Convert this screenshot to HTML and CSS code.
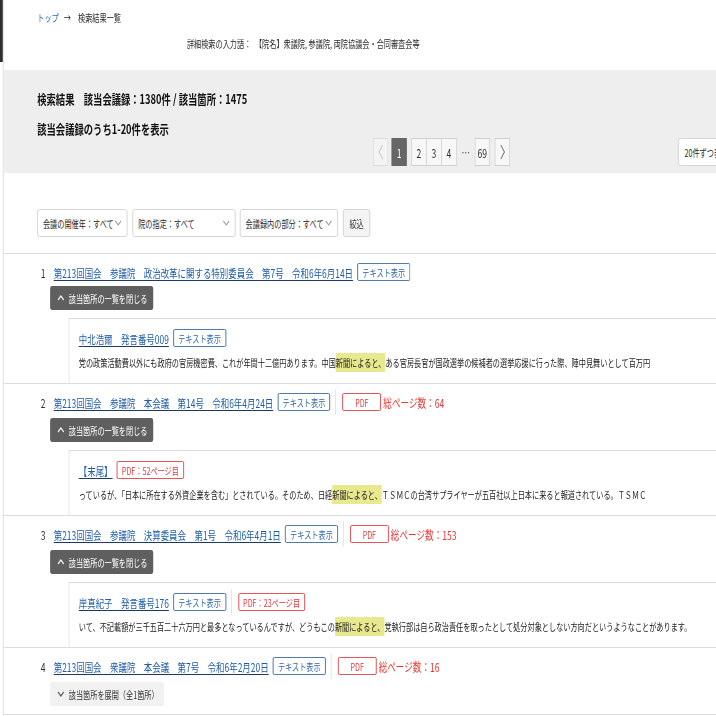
FILE: index.html
```html
<!DOCTYPE html>
<html lang="ja">
<head>
<meta charset="utf-8">
<title>検索結果一覧</title>
<link rel="stylesheet" href="styles.css">
</head>
<body>
<div class="screen">
  <div class="edge"><div class="edge-dark"></div></div>
  <main class="page">
    <nav class="crumbs"><a href="#">トップ</a><span class="arrow">→</span><span>検索結果一覧</span></nav>
    <p class="terms">詳細検索の入力語：　【院名】衆議院, 参議院, 両院協議会・合同審査会等</p>

    <section class="summary">
      <h1>検索結果　該当会議録：1380件 / 該当箇所：1475</h1>
      <h2>該当会議録のうち1-20件を表示</h2>
      <div class="pager-row">
        <ul class="pager">
          <li class="pg prev"><svg viewBox="0 0 8 16" width="8" height="16"><polyline points="6.5,1 1.5,8 6.5,15" fill="none" stroke="#c4c4c4" stroke-width="1.2"/></svg></li>
          <li class="pg current">1</li>
          <li class="pg joined">2</li>
          <li class="pg joined">3</li>
          <li class="pg joined">4</li>
          <li class="pg ellipsis">…</li>
          <li class="pg">69</li>
          <li class="pg next"><svg viewBox="0 0 8 16" width="8" height="16"><polyline points="1.5,1 6.5,8 1.5,15" fill="none" stroke="#666" stroke-width="1.2"/></svg></li>
        </ul>
        <div class="per-page">20件ずつ表示<svg class="caret" viewBox="0 0 10 6" width="10" height="6"><polyline points="1,1 5,5 9,1" fill="none" stroke="#999" stroke-width="1.2"/></svg></div>
      </div>
    </section>

    <div class="filters">
      <div class="select year">会議の開催年：すべて<svg class="caret" viewBox="0 0 10 6" width="10" height="6"><polyline points="1,1 5,5 9,1" fill="none" stroke="#999" stroke-width="1.2"/></svg></div>
      <div class="select house">院の指定：すべて<svg class="caret" viewBox="0 0 10 6" width="10" height="6"><polyline points="1,1 5,5 9,1" fill="none" stroke="#999" stroke-width="1.2"/></svg></div>
      <div class="select part">会議録内の部分：すべて<svg class="caret" viewBox="0 0 10 6" width="10" height="6"><polyline points="1,1 5,5 9,1" fill="none" stroke="#999" stroke-width="1.2"/></svg></div>
      <button class="filter-btn" type="button">絞込</button>
    </div>

    <ol class="results">
      <li class="result">
        <div class="result-head">
          <span class="num">1</span>
          <a class="title" href="#">第213回国会　参議院　政治改革に関する特別委員会　第7号　令和6年6月14日</a>
          <span class="tag">テキスト表示</span>
        </div>
        <div class="toggle"><svg class="caret" viewBox="0 0 10 6" width="10" height="6"><polyline points="1,5 5,1 9,5" fill="none" stroke="#fff" stroke-width="1.4"/></svg>該当箇所の一覧を閉じる</div>
        <div class="hits">
          <div class="hit-head">
            <a class="speaker" href="#">中北浩爾　発言番号009</a>
            <span class="tag">テキスト表示</span>
          </div>
          <p class="snippet">党の政策活動費以外にも政府の官房機密費、これが年間十二億円あります。中国<mark>新聞によると、</mark>ある官房長官が国政選挙の候補者の選挙応援に行った際、陣中見舞いとして百万円</p>
        </div>
      </li>

      <li class="result">
        <div class="result-head">
          <span class="num">2</span>
          <a class="title" href="#">第213回国会　参議院　本会議　第14号　令和6年4月24日</a>
          <span class="tag">テキスト表示</span>
          <span class="pdf-group"><span class="tag pdf short">PDF</span><span class="pages">総ページ数：64</span></span>
        </div>
        <div class="toggle"><svg class="caret" viewBox="0 0 10 6" width="10" height="6"><polyline points="1,5 5,1 9,5" fill="none" stroke="#fff" stroke-width="1.4"/></svg>該当箇所の一覧を閉じる</div>
        <div class="hits">
          <div class="hit-head">
            <a class="speaker" href="#">【末尾】</a>
            <span class="tag pdf">PDF：52ページ目</span>
          </div>
          <p class="snippet">っているが、「日本に所在する外資企業を含む」とされている。そのため、日経<mark>新聞によると、</mark>ＴＳＭＣの台湾サプライヤーが五百社以上日本に来ると報道されている。ＴＳＭＣ</p>
        </div>
      </li>

      <li class="result">
        <div class="result-head">
          <span class="num">3</span>
          <a class="title" href="#">第213回国会　参議院　決算委員会　第1号　令和6年4月1日</a>
          <span class="tag">テキスト表示</span>
          <span class="pdf-group"><span class="tag pdf short">PDF</span><span class="pages">総ページ数：153</span></span>
        </div>
        <div class="toggle"><svg class="caret" viewBox="0 0 10 6" width="10" height="6"><polyline points="1,5 5,1 9,5" fill="none" stroke="#fff" stroke-width="1.4"/></svg>該当箇所の一覧を閉じる</div>
        <div class="hits">
          <div class="hit-head">
            <a class="speaker" href="#">岸真紀子　発言番号176</a>
            <span class="tag">テキスト表示</span>
            <span class="pdf-group"><span class="tag pdf">PDF：23ページ目</span></span>
          </div>
          <p class="snippet">いて、不記載額が三千五百二十六万円と最多となっているんですが、どうもこの<mark>新聞によると、</mark>党執行部は自ら政治責任を取ったとして処分対象としない方向だというようなことがあります。</p>
        </div>
      </li>

      <li class="result closed">
        <div class="result-head">
          <span class="num">4</span>
          <a class="title" href="#">第213回国会　衆議院　本会議　第7号　令和6年2月20日</a>
          <span class="tag">テキスト表示</span>
          <span class="pdf-group"><span class="tag pdf short">PDF</span><span class="pages">総ページ数：16</span></span>
        </div>
        <div class="toggle collapsed"><svg class="caret" viewBox="0 0 10 6" width="10" height="6"><polyline points="1,1 5,5 9,1" fill="none" stroke="#555" stroke-width="1.4"/></svg>該当箇所を展開（全1箇所）</div>
      </li>
    </ol>
  </main>
</div>
</body>
</html>
```

FILE: styles.css
```css
html, body {
  margin: 0;
  padding: 0;
  overflow: hidden;
  background: #fff;
}

body {
  font-family: "Noto Sans CJK JP", "Noto Sans", sans-serif;
  font-size: 10px;
  color: #2a2a2a;
}

/* the reference is a 1000px-wide page shown horizontally condensed */
.screen {
  display: flex;
  width: 1040px;
  min-height: 716px;
  transform: scaleX(0.716);
  transform-origin: 0 0;
}

.edge {
  width: 4px;
  flex: none;
}

.edge-dark {
  height: 62px;
  background: #2e2e2e;
}

.page {
  flex: 1;
  border-left: 1.4px solid #d0d0d0;
}

/* breadcrumb */
.crumbs {
  display: flex;
  align-items: center;
  height: 16px;
  line-height: 16px;
  margin: 10px 0 0;
  padding-left: 47px;
}

.crumbs a {
  color: #2a6cb8;
  text-decoration: none;
}

.arrow {
  margin: 0 10px 0 7px;
}

.terms {
  margin: 10px 0 0;
  padding-left: 256px;
  height: 16px;
  line-height: 16px;
  white-space: nowrap;
}

/* summary band */
.summary {
  margin-top: 18px;
  height: 103px;
  box-sizing: border-box;
  background: #eeeeee;
  padding: 20px 0 7px 47px;
}

.summary h1,
.summary h2 {
  margin: 0;
  font-size: 13px;
  line-height: 18px;
  font-weight: 700;
  color: #111;
  white-space: nowrap;
}

.summary h2 {
  margin-top: 12px;
}

.pager-row {
  display: flex;
  align-items: center;
  height: 28px;
}

.pager {
  display: flex;
  list-style: none;
  margin: 0 0 0 469px;
  padding: 0;
}

.pg {
  box-sizing: border-box;
  width: 21px;
  height: 28px;
  border: 1px solid #cfcfcf;
  background: #f7f7f7;
  display: flex;
  align-items: center;
  justify-content: center;
  font-size: 12px;
  color: #333;
}

.pg.prev {
  margin-right: 5px;
  background: #f3f3f3;
  border-color: #dcdcdc;
}

.pg.current {
  background: #666;
  border-color: #666;
  color: #fff;
  margin-right: 6px;
}

.pg.joined {
  width: 22px;
}

.pg.joined + .pg.joined {
  margin-left: -1px;
}

.pg.ellipsis {
  width: 25px;
  border: none;
  background: none;
}

.pg.next {
  margin-left: 7px;
}

.per-page {
  margin-left: 235px;
  width: 120px;
  height: 28px;
  box-sizing: border-box;
  border: 1px solid #cfcfcf;
  border-radius: 3px;
  background: #fff;
  display: flex;
  align-items: center;
  justify-content: space-between;
  padding: 0 8px;
  white-space: nowrap;
}

/* filters */
.filters {
  display: flex;
  height: 28px;
  margin: 36px 0 16px;
  padding-left: 47px;
}

.select {
  box-sizing: border-box;
  height: 28px;
  border: 1px solid #cfcfcf;
  border-radius: 3px;
  background: #fff;
  display: flex;
  align-items: center;
  justify-content: space-between;
  padding: 0 7px;
  margin-right: 7px;
  white-space: nowrap;
}

.select.year { width: 126px; }
.select.house { width: 144px; margin-right: 6px; }
.select.part { width: 137px; }

.filter-btn {
  box-sizing: border-box;
  width: 38px;
  height: 28px;
  padding: 0;
  border: 1px solid #cfcfcf;
  border-radius: 3px;
  background: #f4f4f4;
  font-family: inherit;
  font-size: 10px;
  color: #333;
}

.caret {
  flex: none;
}

/* results */
.results {
  list-style: none;
  margin: 0;
  padding: 0;
  border-top: 1px solid #dcdcdc;
}

.result {
  border-bottom: 1px solid #dcdcdc;
  padding-top: 9px;
}

.result.closed {
  padding-bottom: 8px;
}

.result-head,
.hit-head {
  display: flex;
  align-items: center;
  height: 18px;
  white-space: nowrap;
}

.result-head {
  padding-left: 52px;
}

.num {
  width: 18px;
  font-size: 12px;
  color: #333;
}

.title,
.speaker {
  font-size: 11.8px;
  color: #1f5da8;
  text-decoration: underline;
  text-decoration-color: #1b3a66;
  text-underline-offset: 2px;
  white-space: nowrap;
}

.tag {
  box-sizing: border-box;
  height: 18px;
  display: inline-flex;
  align-items: center;
  padding: 0 6px;
  margin-left: 6px;
  border: 1px solid #2f65a8;
  border-radius: 2px;
  background: #fff;
  color: #2f65a8;
  font-size: 10px;
  white-space: nowrap;
}

.tag.pdf {
  border-color: #e0393e;
  color: #e0393e;
}

.tag.short {
  width: 54px;
  justify-content: center;
}

.pdf-group {
  display: flex;
  align-items: center;
  height: 26px;
  margin-left: 7px;
  padding-left: 3px;
  border-left: 1px solid #dcdcdc;
}

.pages {
  margin-left: 3px;
  font-size: 12px;
  color: #e53935;
}

.toggle {
  display: flex;
  align-items: center;
  box-sizing: border-box;
  width: 144px;
  height: 24px;
  margin: 7px 0 0 65px;
  padding-left: 10px;
  border-radius: 3px;
  background: #5f5f5f;
  color: #fff;
  font-size: 10px;
  white-space: nowrap;
}

.result:first-child .toggle {
  margin-top: 5px;
}

.toggle .caret {
  margin-right: 6px;
}

.toggle.collapsed {
  width: 159px;
  background: #f1f1f1;
  color: #333;
}

.hits {
  margin: 8px 0 0 91px;
  padding: 10px 0 12px 13px;
  border-top: 1px solid #dcdcdc;
  border-left: 1px solid #dcdcdc;
}

.snippet {
  margin: 8px 0 0;
  height: 16px;
  line-height: 16px;
  font-size: 10px;
  color: #222;
  white-space: nowrap;
}

.snippet mark {
  background: #e8e88e;
  color: inherit;
  padding: 2px 0;
}
```
